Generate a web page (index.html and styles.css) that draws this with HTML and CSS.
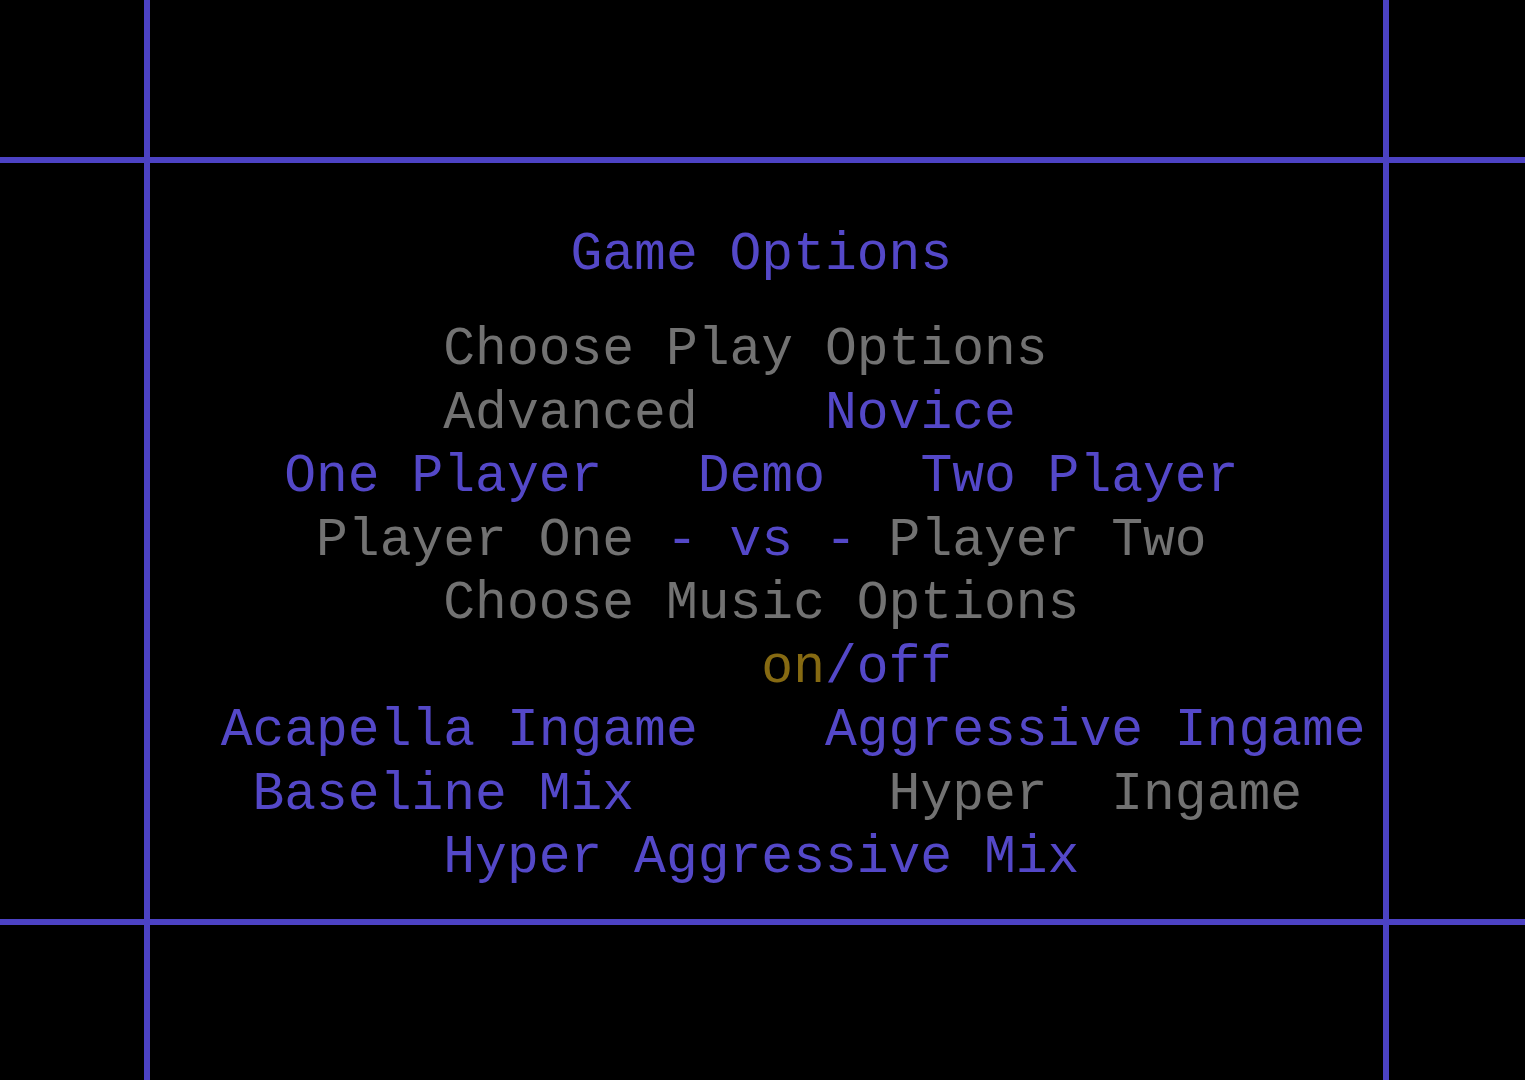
FILE: index.html
```html
<!DOCTYPE html>
<html>
<head>
<meta charset="utf-8">
<link rel="stylesheet" href="styles.css">
</head>
<body>
<main class="screen">
<div class="line">                  <span class="b">Game Options</span></div>
<div class="gap"></div>
<div class="line">              <span class="g">Choose Play Options</span></div>
<div class="line">              <span class="g">Advanced</span>    <span class="b">Novice</span></div>
<div class="line">         <span class="b">One Player</span>   <span class="b">Demo</span>   <span class="b">Two Player</span></div>
<div class="line">          <span class="g">Player One</span> <span class="b">- vs -</span> <span class="g">Player Two</span></div>
<div class="line">              <span class="g">Choose Music Options</span></div>
<div class="line">                        <span class="y">on</span><span class="b">/off</span></div>
<div class="line">       <span class="b">Acapella Ingame</span>    <span class="b">Aggressive Ingame</span></div>
<div class="line">        <span class="b">Baseline Mix</span>        <span class="g">Hyper  Ingame</span></div>
<div class="line">              <span class="b">Hyper Aggressive Mix</span></div>
</main>
</body>
</html>
```

FILE: styles.css
```css
html, body {
  margin: 0;
  padding: 0;
  background: #000;
}
body {
  width: 1525px;
  height: 1080px;
  overflow: hidden;
  background-color: #000;
  background-image:
    linear-gradient(#4c42c4, #4c42c4),
    linear-gradient(#4c42c4, #4c42c4),
    linear-gradient(#4c42c4, #4c42c4),
    linear-gradient(#4c42c4, #4c42c4);
  background-repeat: no-repeat;
  background-size: 6px 1080px, 6px 1080px, 1525px 6px, 1525px 6px;
  background-position: 144px 0, 1383px 0, 0 157px, 0 919px;
}
.screen {
  padding-top: 224px;
  padding-left: 0;
  margin-left: -2px;
  font-family: "Liberation Mono", "DejaVu Sans Mono", monospace;
  font-size: 53px;
  line-height: 63.53px;
}
.line {
  height: 63.53px;
  white-space: pre;
}
.gap {
  height: 31.76px;
}
.b { color: #5448c8; }
.g { color: #727272; }
.y { color: #866a12; }
```
